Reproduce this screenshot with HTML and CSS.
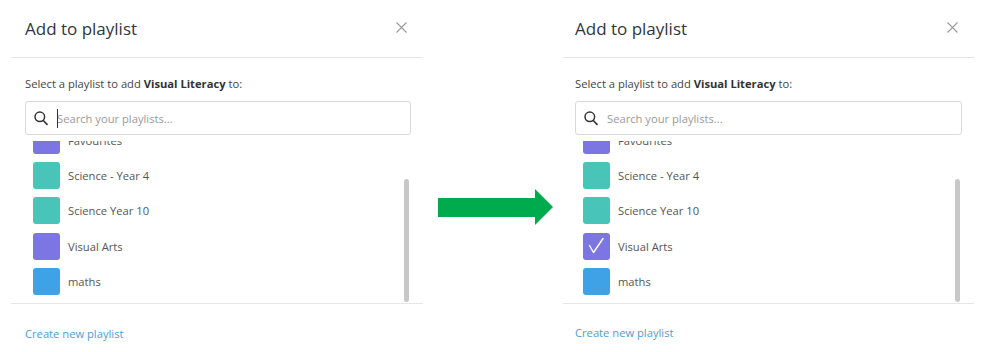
FILE: index.html
```html
<!DOCTYPE html>
<html>
<head>
<meta charset="utf-8">
<link rel="stylesheet" href="styles.css">
</head>
<body>
<div class="stage">
  <section class="panel">
    <header class="head">
      <h2 class="title">Add to playlist</h2>
      <svg class="close" width="11" height="11" viewBox="0 0 11 11"><path d="M0.5 0.5L10.5 10.5M10.5 0.5L0.5 10.5" stroke="#9a9a9a" stroke-width="1.1" fill="none"/></svg>
    </header>
    <div class="body">
      <p class="lead">Select a playlist to add <b>Visual Literacy</b> to:</p>
      <div class="search">
        <svg class="mag" width="14" height="15" viewBox="0 0 14 15"><circle cx="5.8" cy="5.8" r="4.8" stroke="#333" stroke-width="1.5" fill="none"/><path d="M9.3 9.5L13 13.4" stroke="#333" stroke-width="1.6" stroke-linecap="round"/></svg>
        <span class="ph"><span class="caret"></span>Search your playlists...</span>
      </div>
    </div>
    <div class="list">
      <div class="items">
        <div class="item"><span class="sq purple"></span>Favourites</div>
        <div class="item"><span class="sq teal"></span>Science - Year 4</div>
        <div class="item"><span class="sq teal"></span>Science Year 10</div>
        <div class="item"><span class="sq purple"></span>Visual Arts</div>
        <div class="item"><span class="sq blue"></span>maths</div>
      </div>
      <div class="thumb"></div>
    </div>
    <footer class="foot"><span class="link">Create new playlist</span></footer>
  </section>

  <div class="arrow-wrap">
    <svg width="116" height="37" viewBox="0 0 116 37"><path d="M0 9H97V0L115 18L97 36V28H0Z" fill="#00ab4e"/></svg>
  </div>

  <section class="panel panel-r">
    <header class="head">
      <h2 class="title">Add to playlist</h2>
      <svg class="close" width="11" height="11" viewBox="0 0 11 11"><path d="M0.5 0.5L10.5 10.5M10.5 0.5L0.5 10.5" stroke="#9a9a9a" stroke-width="1.1" fill="none"/></svg>
    </header>
    <div class="body">
      <p class="lead">Select a playlist to add <b>Visual Literacy</b> to:</p>
      <div class="search">
        <svg class="mag" width="14" height="15" viewBox="0 0 14 15"><circle cx="5.8" cy="5.8" r="4.8" stroke="#333" stroke-width="1.5" fill="none"/><path d="M9.3 9.5L13 13.4" stroke="#333" stroke-width="1.6" stroke-linecap="round"/></svg>
        <span class="ph">Search your playlists...</span>
      </div>
    </div>
    <div class="list">
      <div class="items">
        <div class="item"><span class="sq purple"></span>Favourites</div>
        <div class="item"><span class="sq teal"></span>Science - Year 4</div>
        <div class="item"><span class="sq teal"></span>Science Year 10</div>
        <div class="item"><span class="sq purple"><svg width="27" height="27" viewBox="0 0 27 27"><path d="M6.5 12.5L10.5 19.5L20 5.5" stroke="#fff" stroke-width="1.4" fill="none" stroke-linecap="round" stroke-linejoin="round"/></svg></span>Visual Arts</div>
        <div class="item"><span class="sq blue"></span>maths</div>
      </div>
      <div class="thumb"></div>
    </div>
    <footer class="foot"><span class="link">Create new playlist</span></footer>
  </section>
</div>
</body>
</html>
```

FILE: styles.css
```css
* { box-sizing: border-box; }
html, body { margin: 0; padding: 0; background: #fff; }
body {
  font-family: "Open Sans", "Noto Sans", "Liberation Sans", sans-serif;
  color: #444;
  width: 982px;
  height: 352px;
  overflow: hidden;
}
.stage {
  display: flex;
  align-items: flex-start;
  padding-left: 11px;
}
.panel {
  width: 412px;
  height: 352px;
  display: flex;
  flex-direction: column;
}
.head {
  height: 58px;
  border-bottom: 1px solid #e6e6e6;
  display: flex;
  align-items: center;
  justify-content: space-between;
  padding: 0 16px 0 14px;
}
.title {
  margin: 0;
  font-size: 17px;
  font-weight: 500;
  color: #2f3640;
  letter-spacing: 0;
}
.close { display: block; margin-top: -2px; }
.body {
  padding: 18px 12px 0 14px;
}
.lead {
  margin: 0 0 9px;
  font-size: 11.2px;
  line-height: 16px;
  color: #444;
}
.lead b { font-weight: 700; color: #333; }
.search {
  height: 34px;
  border: 1px solid #d9d9d9;
  border-radius: 3px;
  display: flex;
  align-items: center;
  padding-left: 8px;
}
.mag { display: block; margin-right: 9px; }
.ph {
  position: relative;
  font-size: 11.2px;
  color: #9a9a9a;
}
.caret {
  position: absolute;
  left: 0;
  top: -2px;
  width: 1px;
  height: 19px;
  background: #333;
}
.list {
  position: relative;
  margin-top: 6px;
  height: 163px;
  overflow: hidden;
  border-bottom: 1px solid #e6e6e6;
}
.items {
  margin-top: -18.5px;
  padding-left: 22px;
}
.item {
  height: 35.33px;
  display: flex;
  align-items: center;
  font-size: 11.2px;
  color: #555;
}
.sq {
  width: 27px;
  height: 27px;
  border-radius: 3px;
  margin-right: 8px;
  flex: none;
  display: block;
}
.sq svg { display: block; }
.purple { background: #7c76e3; }
.teal { background: #48c4b8; }
.blue { background: #3fa2e6; }
.thumb {
  position: absolute;
  right: 14px;
  top: 38px;
  width: 5px;
  height: 123px;
  border-radius: 3px;
  background: #c8c8c8;
}
.foot {
  flex: 1;
  display: flex;
  align-items: center;
  padding: 10px 0 0 14px;
}
.link {
  font-size: 11.2px;
  color: #4a9fd6;
}
.arrow-wrap {
  width: 140px;
  padding: 189px 0 0 15px;
}
.arrow-wrap svg { display: block; }
.panel-r { width: 411px; }
.panel-r .head { padding-left: 12px; }
.panel-r .body { padding-left: 12px; }
.panel-r .foot { padding-left: 12px; padding-top: 8px; }
.panel-r .items { padding-left: 20px; }
```
